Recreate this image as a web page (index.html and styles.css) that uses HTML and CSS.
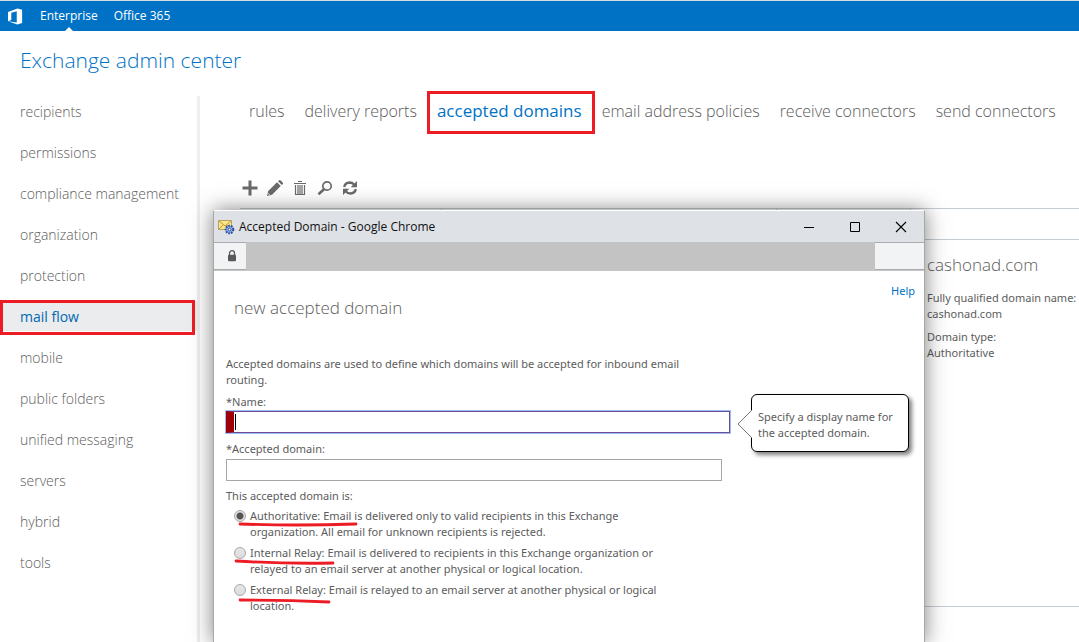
FILE: index.html
```html
<!DOCTYPE html>
<html lang="en">
<head>
<meta charset="utf-8">
<title>Exchange admin center</title>
<link rel="stylesheet" href="styles.css">
</head>
<body>
<header class="topbar">
  <svg class="logo" viewBox="0 0 17 18" aria-hidden="true"><path fill="#fff" d="M0 3.6 10 0l5 1.4v14L10 17 0 13.600l9.300 1.200V3L3.500 4.500v7.600L0 13.600z"/></svg>
  <a class="toplink current" href="#">Enterprise</a>
  <a class="toplink" href="#">Office 365</a>
</header>
<h1 class="title">Exchange admin center</h1>
<div class="body">
  <nav class="side">
    <a class="side-item" href="#">recipients</a>
    <a class="side-item" href="#">permissions</a>
    <a class="side-item" href="#">compliance management</a>
    <a class="side-item" href="#">organization</a>
    <a class="side-item" href="#">protection</a>
    <a class="side-item selected" href="#">mail flow</a>
    <a class="side-item" href="#">mobile</a>
    <a class="side-item" href="#">public folders</a>
    <a class="side-item" href="#">unified messaging</a>
    <a class="side-item" href="#">servers</a>
    <a class="side-item" href="#">hybrid</a>
    <a class="side-item" href="#">tools</a>
  </nav>
  <main class="main">
    <nav class="tabs">
      <a class="tab" href="#">rules</a>
      <a class="tab" href="#">delivery reports</a>
      <a class="tab active" href="#">accepted domains</a>
      <a class="tab" href="#">email address policies</a>
      <a class="tab" href="#">receive connectors</a>
      <a class="tab" href="#">send connectors</a>
    </nav>
    <div class="tools">
      <button class="tool" type="button" aria-label="New"><svg viewBox="0 0 16 16"><path d="M8 0.500v15M0.500 8h15" stroke="#6a6a6a" stroke-width="3" fill="none"/></svg></button>
      <button class="tool" type="button" aria-label="Edit"><svg viewBox="0 0 16 16"><path fill="#6a6a6a" d="M0 16l1.200-5L10 2.300l3.800 3.800L5 14.800zM11 1.300l.900-.900q.900-.8 1.800 0l2 2q.8.9 0 1.800l-.9.900z"/><path d="M.9 13.200l2 2" stroke="#fff" stroke-width=".9"/></svg></button>
      <button class="tool" type="button" aria-label="Delete"><svg viewBox="0 0 16 16"><path d="M2 3.500h12M6 1.500h4" stroke="#6a6a6a" stroke-width="1.200"/><path d="M3.500 5v9.500h9V5M6 5v9.500M8 5v9.500M10 5v9.500" stroke="#6a6a6a" stroke-width="1.200" fill="none"/></svg></button>
      <button class="tool" type="button" aria-label="Search"><svg viewBox="0 0 16 16"><circle cx="10" cy="6" r="4.200" fill="none" stroke="#6a6a6a" stroke-width="1.700"/><path d="M7 9.200l-5.500 5" stroke="#6a6a6a" stroke-width="2.600"/></svg></button>
      <button class="tool" type="button" aria-label="Refresh"><svg viewBox="0 0 16 16"><path d="M2.200 7Q3 2.800 7.600 2.500q2.600 0 4.600 2M13.800 9q-.8 4.200-5.400 4.500-2.600 0-4.600-2" fill="none" stroke="#6a6a6a" stroke-width="2.400"/><path fill="#6a6a6a" d="M15 1v6.300H8.700zM1 15V8.700h6.300z"/></svg></button>
    </div>
    <div class="split">
      <table class="list"><thead><tr><th class="c1"></th><th class="c2"></th><th></th></tr></thead></table>
      <section class="details">
        <div class="details-head"></div>
        <div class="details-body">
          <h2 class="domain">cashonad.com</h2>
          <p class="fact">Fully qualified domain name:<br>cashonad.com</p>
          <p class="fact">Domain type:<br>Authoritative</p>
        </div>
      </section>
    </div>
    <footer class="status"></footer>
  </main>
</div>

<section class="window" aria-label="Accepted Domain">
  <div class="win-title">
    <svg class="app-icon" viewBox="0 0 17 16"><path d="M.5 1.500h13v9H.5z" fill="#f9e48b" stroke="#b6a25b"/><path d="M1 2l6 5 6-5M1 10l4-4M13 10L9 6" fill="none" stroke="#c49b32"/><circle cx="11.500" cy="10.500" r="3.800" fill="#8fb0e8" stroke="#2e4f9c" stroke-width="2" stroke-dasharray="1.700 1"/><circle cx="11.500" cy="10.500" r="1.300" fill="#fff" stroke="#2e4f9c"/></svg>
    <span class="win-name">Accepted Domain - Google Chrome</span>
    <button class="win-btn" type="button" aria-label="Minimize"><svg viewBox="0 0 12 12"><path d="M1 6.500h10" stroke="#000"/></svg></button>
    <button class="win-btn" type="button" aria-label="Maximize"><svg viewBox="0 0 12 12"><path d="M1.500 1.500h9v9h-9z" fill="none" stroke="#000"/></svg></button>
    <button class="win-btn" type="button" aria-label="Close"><svg viewBox="0 0 12 12"><path d="M1 1l10 10M11 1L1 11" stroke="#000" stroke-width="1.100"/></svg></button>
  </div>
  <div class="address">
    <div class="lock"><svg viewBox="0 0 10 12"><path d="M2.500 5V3.200a2.500 2.500 0 0 1 5 0V5" fill="none" stroke="#5a5a5a" stroke-width="1.300"/><rect x="1" y="4.700" width="8" height="6.600" rx="1" fill="#5a5a5a"/></svg></div>
    <div class="url"></div>
    <div class="address-end"></div>
  </div>
  <form class="form">
    <a class="help" href="#">Help</a>
    <h2 class="form-title">new accepted domain</h2>
    <p class="intro">Accepted domains are used to define which domains will be accepted for inbound email<br>routing.</p>
    <label class="label" for="name">*Name:</label>
    <div class="name-row">
      <div class="name-field"><input class="name-input" id="name" type="text"><span class="caret"></span></div>
      <div class="tip">Specify a display name for<br>the accepted domain.<svg class="tip-arrow" viewBox="0 0 15 30"><path d="M15 1L1 15l14 14" fill="#fff" stroke="#777"/></svg></div>
    </div>
    <label class="label" for="domain">*Accepted domain:</label>
    <input class="domain-input" id="domain" type="text">
    <fieldset class="kinds">
      <legend class="legend">This accepted domain is:</legend>
      <div class="kind"><input class="radio" type="radio" name="kind" id="k1" checked><label for="k1">Authoritative: Email is delivered only to valid recipients in this Exchange<br>organization. All email for unknown recipients is rejected.</label></div>
      <div class="kind"><input class="radio" type="radio" name="kind" id="k2"><label for="k2">Internal Relay: Email is delivered to recipients in this Exchange organization or<br>relayed to an email server at another physical or logical location.</label></div>
      <div class="kind"><input class="radio" type="radio" name="kind" id="k3"><label for="k3">External Relay: Email is relayed to an email server at another physical or logical<br>location.</label></div>
      <svg class="marks" viewBox="0 0 140 100" aria-hidden="true"><path d="M14 16Q70 18 130 16M10 53Q60 56 107 55M14 92Q60 92 103 94" fill="none" stroke="#ed1c24" stroke-width="2.800" stroke-linecap="round"/></svg>
    </fieldset>
  </form>
</section>
</body>
</html>
```

FILE: styles.css
```css
* { box-sizing: border-box; }
body {
  margin: 0;
  height: 100vh;
  overflow: hidden;
  position: relative;
  display: flex;
  flex-direction: column;
  background: #fff;
  color: #5c5c5c;
  font: 11px/16px "Noto Sans", "Open Sans", sans-serif;
}
a { color: inherit; text-decoration: none; }
h1, h2, p { margin: 0; font-weight: 300; }
h1, h2, .topbar, .side, .tabs, .win-title { font-family: "Open Sans", "Noto Sans", sans-serif; }
button { border: 0; padding: 0; background: none; }
svg { display: block; }

.topbar {
  display: flex;
  gap: 16px;
  height: 31px;
  padding-left: 8px;
  border-top: 1px solid #d5dce2;
  background: #0072c6;
  color: #fff;
  font-size: 12px;
  line-height: 29px;
}
.logo { width: 16px; height: 18px; margin-top: 7px; }
.toplink { position: relative; }
.current::after {
  content: "";
  position: absolute;
  bottom: 0;
  left: 50%;
  margin-left: -4px;
  border: 4px solid transparent;
  border-top: 0;
  border-bottom-color: #fff;
}
.title {
  padding: 13px 20px 20px;
  color: #0072c6;
  font-size: 21px;
  line-height: 32px;
}
.body { flex: 1; display: flex; min-height: 0; }
.side {
  width: 200px;
  flex: none;
  display: flex;
  flex-direction: column;
  gap: 11px;
  border-right: 3px solid #eee;
}
.side-item {
  height: 30px;
  padding-left: 20px;
  font-size: 14px;
  font-weight: 300;
  line-height: 31px;
}
.selected {
  position: relative;
  background: #eaecee;
  color: #0067b0;
  font-weight: 400;
}
.selected::after {
  content: "";
  position: absolute;
  inset: -1px 2px -4px 0;
  border: 3px solid #ed1c24;
}
.main { flex: 1; min-width: 0; padding-left: 40px; display: flex; flex-direction: column; }
.tabs {
  display: flex;
  gap: 20px;
  padding-left: 9px;
  font-size: 16px;
  font-weight: 300;
  line-height: 30px;
  white-space: nowrap;
}
.active { position: relative; color: #0072c6; font-size: 17px; font-weight: 400; }
.active::after {
  content: "";
  position: absolute;
  inset: -5px -13px -8px -10px;
  border: 3px solid #ed1c24;
}
.tools { display: flex; gap: 9px; padding: 54px 0 12px 2px; }
.tool { width: 16px; height: 16px; }
.split { flex: 1; display: flex; border-top: 1px solid #c5ccd2; }
.list { flex: 1; height: 31px; border-collapse: collapse; border-bottom: 1px solid #c5ccd2; }
.list th { padding: 0; border-right: 1px solid #c5ccd2; }
.c1 { width: 30%; }
.c2 { width: 50%; }
.details { width: 168px; white-space: nowrap; }
.details-head { height: 31px; border-bottom: 1px solid #c5ccd2; }
.details-body { padding: 9px 0 0 16px; }
.domain { font-size: 17px; line-height: 32px; margin-bottom: 9px; }
.fact { font-weight: 400; margin-bottom: 7px; }
.status { height: 36px; border-top: 1px solid #c5ccd2; }

.window {
  position: absolute;
  left: 213px;
  right: 154px;
  top: 210px;
  bottom: -2px;
  display: flex;
  flex-direction: column;
  background: #fff;
  border: 1px solid #a5a7a9;
  border-top-color: #fff;
  box-shadow: 0 0 20px rgba(0, 0, 0, .5);
}
.win-title {
  display: flex;
  align-items: center;
  height: 31px;
  padding-left: 4px;
  background: #dee1e6;
  color: #111;
  font-size: 12px;
}
.app-icon { width: 17px; height: 16px; margin-right: 4px; }
.win-name { flex: 1; }
.win-btn { width: 46px; height: 30px; display: grid; place-items: center; }
.win-btn svg { width: 12px; height: 12px; }
.address { display: flex; height: 29px; background: #c3c3c3; border-bottom: 1px solid #c5c5c5; }
.lock, .address-end { background: #f1f3f4; border-top: 1px solid #a9abad; border-bottom: 1px solid #a9abad; }
.lock { width: 32px; padding-left: 4px; display: grid; place-items: center; }
.lock svg { width: 10px; height: 12px; }
.url { flex: 1; }
.address-end { width: 49px; }

.form { position: relative; padding: 21px 9px 0 12px; }
.help { position: absolute; right: 9px; top: 12px; color: #0072c6; }
.form-title { padding-left: 8px; font-size: 17px; line-height: 32px; margin-bottom: 32px; }
.intro { font-weight: 400; margin-bottom: 6px; }
.label { display: block; }
.name-row { display: flex; align-items: flex-start; gap: 21px; height: 25px; margin: 1px 0 5px; }
.name-field { position: relative; flex: 1; }
.name-input {
  display: block;
  width: 100%;
  height: 22px;
  border: 1px solid #6b4d93;
  border-left: 8px solid #a00008;
  outline: 1px solid #9dbcf5;
  background: #fff;
}
.caret { position: absolute; left: 9px; top: 3px; width: 1px; height: 16px; background: #000; }
.tip {
  position: relative;
  flex: none;
  width: 158px;
  height: 58px;
  margin: -17px 6px 0 0;
  padding: 14px 0 0 6px;
  border: 1px solid #000;
  border-radius: 6px;
  background: #fff;
  box-shadow: 3px 3px 4px rgba(0, 0, 0, .5);
  white-space: nowrap;
}
.tip-arrow { position: absolute; left: -15px; top: 14px; width: 15px; height: 30px; }
.domain-input { display: block; width: 496px; height: 22px; margin: 2px 0 7px; border: 1px solid #a6a6a6; background: #fff; }
.kinds { position: relative; margin: 0; padding: 0; border: 0; }
.legend { padding: 0; margin-bottom: 4px; }
.kind { display: flex; gap: 4px; padding-left: 8px; margin-bottom: 5px; }
.radio {
  appearance: none;
  width: 12px;
  height: 12px;
  margin: 2px 0 0;
  border: 1px solid #a8a8a8;
  border-radius: 50%;
  background: linear-gradient(#e6e6e6, #dcdcdc);
}
.radio:checked { background: radial-gradient(circle, #555 0 3px, #e4e4e4 4px); }
.marks { position: absolute; left: 0; top: 0; width: 140px; height: 100px; pointer-events: none; }
```
